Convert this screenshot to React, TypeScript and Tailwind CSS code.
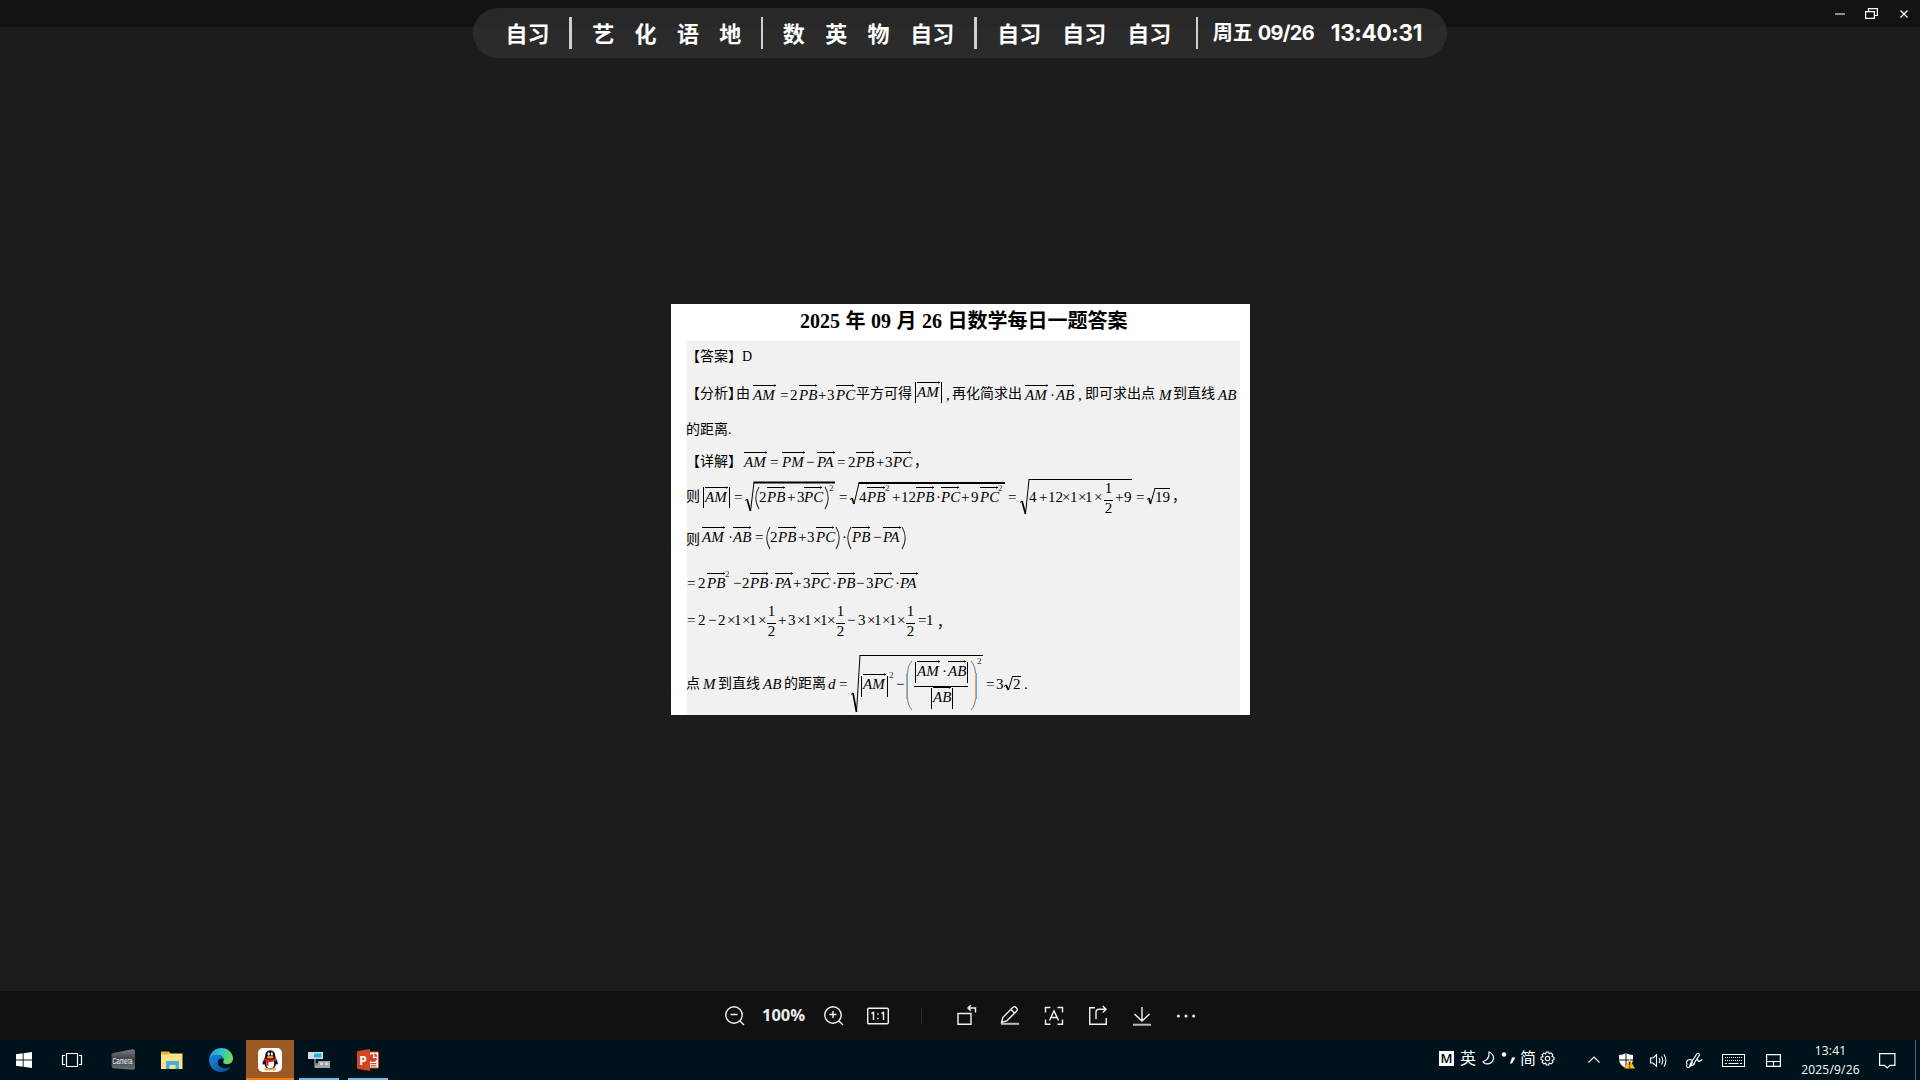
import React, { ReactNode } from "react";

type Item = [number, ReactNode];

/* A run of formula pieces: each piece starts at its tab stop and fills up to the next one. */
function Row({ items, from, className = "" }: { items: Item[]; from: number; className?: string }) {
  return (
    <div className={`flex h-4 items-start whitespace-nowrap ${className}`}>
      <span className="shrink-0" style={{ width: items[0][0] - from }} />
      {items.map(([x, node], i) => (
        <span
          key={i}
          className="block h-4 shrink-0"
          style={i < items.length - 1 ? { width: items[i + 1][0] - x } : undefined}
        >
          {node}
        </span>
      ))}
    </div>
  );
}

const Cn = ({ children, low = false, high = false }: { children: ReactNode; low?: boolean; high?: boolean }) => (
  <span className={`block text-[14px] leading-4 ${low ? "mt-[3px]" : ""} ${high ? "-mt-px" : ""}`}>{children}</span>
);
const It = ({ children }: { children: ReactNode }) => <i className="block">{children}</i>;

function Vec({ children, up = false }: { children: string; up?: boolean }) {
  const w = children.includes("M") ? 23 : 18;
  return (
    <span className={`relative block ${up ? "-mt-[3px]" : ""}`}>
      <i className="block">{children}</i>
      <svg className="absolute -top-[3px] left-0 overflow-visible" width={w} height="4">
        <rect x="0" y="1" width={w} height="1" fill="#000" />
        <path d={`M${w - 2} 0.3L${w + 0.3} 1.5L${w - 2} 2.7Z`} fill="#000" />
      </svg>
    </span>
  );
}

const Sup = ({ high = false }: { high?: boolean }) => (
  <span className={`block text-[9px] leading-2 text-[#333] ${high ? "-mt-[19px]" : "-mt-[5px]"}`}>2</span>
);

const Half = () => (
  <span className="-mt-[9px] flex w-[9px] flex-col items-center">
    <span className="h-4">1</span>
    <span className="mt-1 h-px w-[9px] bg-black" />
    <span className="-mt-px h-4">2</span>
  </span>
);

const Bar = ({ shift = "-mt-0.5" }: { shift?: string }) => (
  <span className={`block h-[21px] w-px bg-black ${shift}`} />
);

function Paren({ right = false }: { right?: boolean }) {
  return (
    <svg className="-mt-0.5 block overflow-visible" width="4" height="22" fill="none" stroke="#333" strokeWidth="1.1">
      <path d={right ? "M0 0Q6.5 11 0 22" : "M4 0Q-2.5 11 4 22"} />
    </svg>
  );
}

function TallParen({ right = false }: { right?: boolean }) {
  const curve = right ? "M0 0Q4.5 5 4.5 13V36Q4.5 44 0 49" : "M6 0Q1.5 5 1.5 13V36Q1.5 44 6 49";
  return (
    <svg className="-mt-[15px] block overflow-visible" width="6" height="49" fill="none">
      <path d={curve} stroke="#777" strokeWidth="1" />
      <path d={right ? "M4.5 12V38" : "M0.5 12V38"} stroke={right ? "#f0a060" : "#c9a48c"} />
      <path d={right ? "M5.5 12V38" : "M1.5 12V38"} stroke="#5aa9e0" />
    </svg>
  );
}

type RootProps = { hook: number; low: [number, number]; apex: [number, number]; end: number; line?: number };
function Root({ hook, low, apex, end, line = 1 }: RootProps) {
  return (
    <svg className="block overflow-visible" width="1" height="1" fill="none" stroke="#000">
      <path d={`M0 ${hook + 1.5}L2 ${hook}`} strokeWidth="1" />
      <path d={`M2 ${hook}L${low[0]} ${low[1]}`} strokeWidth="1.7" />
      <path d={`M${low[0]} ${low[1]}L${apex[0]} ${apex[1]}`} strokeWidth="1" />
      <path d={`M${apex[0] - 0.5} ${apex[1]}H${end}`} strokeWidth={line} />
    </svg>
  );
}

const analysis: Item[] = [
  [686, <Cn high>【分析</Cn>], [728, <span className="-mt-px block h-4 w-2 overflow-hidden text-[14px]">】</span>],
  [736, <Cn high>由</Cn>], [753, <Vec>AM</Vec>], [780, "="], [790, "2"],
  [799, <Vec>PB</Vec>], [818, "+"], [827, "3"], [836, <Vec>PC</Vec>], [856, <Cn high>平方可得</Cn>],
  [915, <Bar shift="-mt-[5px]" />], [917, <Vec up>AM</Vec>], [941, <Bar shift="-mt-[5px]" />], [946, ","],
  [952, <Cn high>再化简求出</Cn>], [1025, <Vec>AM</Vec>], [1050, "·"], [1056, <Vec>AB</Vec>], [1078, ","],
  [1085, <Cn high>即可求出点</Cn>], [1159, <It>M</It>], [1173, <Cn high>到直线</Cn>], [1218, <It>AB</It>],
];

const detail: Item[] = [
  [686, <Cn>【详解</Cn>], [728, <Cn>】</Cn>], [744, <Vec>AM</Vec>], [770, "="], [782, <Vec>PM</Vec>], [806, "−"],
  [817, <Vec>PA</Vec>], [837, "="], [848, "2"], [856, <Vec>PB</Vec>], [876, "+"], [885, "3"],
  [893, <Vec>PC</Vec>], [914, <Cn>，</Cn>],
];

const modulus: Item[] = [
  [686, <Cn>则</Cn>], [703, <Bar />], [705, <Vec>AM</Vec>], [729, <Bar />], [734, "="],
  [745, <Root hook={10} low={[5.5, 22]} apex={[9, -6.5]} end={90} line={2} />],
  [755, <Paren />], [759, "2"], [767, <Vec>PB</Vec>], [787, "+"], [797, "3"], [804, <Vec>PC</Vec>],
  [825, <Paren right />], [829, <Sup />], [839, "="],
  [850, <Root hook={9} low={[4, 15]} apex={[9, -6]} end={155} line={2} />],
  [859, "4"], [867, <Vec>PB</Vec>], [885, <Sup />], [892, "+"], [901, "12"], [916, <Vec>PB</Vec>], [936, "·"],
  [941, <Vec>PC</Vec>], [961, "+"], [971, "9"], [980, <Vec>PC</Vec>], [998, <Sup />], [1008, "="],
  [1020, <Root hook={12} low={[5.5, 25]} apex={[9, -9.5]} end={112} />],
  [1029, "4"], [1039, "+"], [1048, "12"], [1062, "×"], [1070, "1"], [1078, "×"], [1085, "1"], [1094, "×"],
  [1104, <Half />], [1115, "+"], [1124, "9"], [1136, "="],
  [1147, <Root hook={9} low={[3.5, 15]} apex={[8, -0.5]} end={23} />], [1155, "19"], [1172, <Cn>，</Cn>],
];

const product: Item[] = [
  [686, <Cn low>则</Cn>], [702, <Vec>AM</Vec>], [728, "·"], [733, <Vec>AB</Vec>], [755, "="], [766, <Paren />],
  [770, "2"], [778, <Vec>PB</Vec>], [798, "+"], [807, "3"], [816, <Vec>PC</Vec>], [836, <Paren right />],
  [842, "·"], [847, <Paren />], [852, <Vec>PB</Vec>], [873, "−"], [883, <Vec>PA</Vec>], [902, <Paren right />],
];

const expanded: Item[] = [
  [687, "="], [698, "2"], [707, <Vec>PB</Vec>], [725, <Sup />], [733, "−"], [742, "2"], [750, <Vec>PB</Vec>],
  [769, "·"], [775, <Vec>PA</Vec>], [793, "+"], [803, "3"], [811, <Vec>PC</Vec>], [832, "·"],
  [837, <Vec>PB</Vec>], [856, "−"], [866, "3"], [874, <Vec>PC</Vec>], [895, "·"], [900, <Vec>PA</Vec>],
];

const numbers: Item[] = [
  [687, "="], [698, "2"], [708, "−"], [718, "2"], [727, "×"], [734, "1"], [742, "×"], [749, "1"], [758, "×"],
  [767, <Half />], [778, "+"], [788, "3"], [797, "×"], [804, "1"], [813, "×"], [820, "1"], [827, "×"],
  [836, <Half />], [847, "−"], [858, "3"], [867, "×"], [874, "1"], [882, "×"], [889, "1"], [897, "×"],
  [906, <Half />], [918, "="], [926, "1"], [937, <Cn low>，</Cn>],
];

const distance: Item[] = [
  [686, <Cn>点</Cn>], [703, <It>M</It>], [718, <Cn>到直线</Cn>], [763, <It>AB</It>], [784, <Cn>的距离</Cn>],
  [828, <It>d</It>], [839, "="],
  [851, <Root hook={17} low={[5.5, 36]} apex={[9, -20.5]} end={132} />],
  [861, <Bar shift="mt-0" />], [863, <Vec>AM</Vec>], [887, <Bar shift="mt-0" />], [889, <Sup />], [896, "−"],
  [906, <TallParen />],
  [914, (
    <span className="-mt-[13px] flex flex-col">
      <Row from={914} items={[
        [915, <Bar shift="-mt-px" />], [917, <Vec>AM</Vec>], [942, "·"], [948, <Vec>AB</Vec>], [967, <Bar shift="-mt-px" />],
      ]} />
      <span className="mt-[7px] h-px w-[54px] bg-black" />
      <Row className="mt-0.5" from={914} items={[
        [931, <Bar shift="-mt-px" />], [933, <Vec>AB</Vec>], [952, <Bar shift="-mt-px" />],
      ]} />
    </span>
  )],
  [971, <TallParen right />], [977, <Sup high />], [986, "="], [996, "3"],
  [1004, <Root hook={9} low={[4.5, 14]} apex={[8.5, 0.5]} end={17} />], [1013, "2"], [1024, "."],
];

function Paper() {
  return (
    <article className="flex h-[411px] w-[579px] flex-col bg-white font-['Liberation_Serif','Noto_Sans_CJK_SC',serif] text-[15px] leading-4 text-black">
      <h1 className="h-[37px] pl-[129px] pt-[3px] text-[20px] leading-[28px] font-bold whitespace-nowrap [word-spacing:0.5px]">
        2025 年 09 月 26 日数学每日一题答案
      </h1>
      <section className="ml-4 h-[374px] w-[553px] bg-[#f1f1f1] pt-2">
        <div className="-ml-px">
          <Row from={686} items={[[686, <Cn>【答案</Cn>], [728, <Cn>】</Cn>], [742, <Cn>D</Cn>]]} />
          <Row className="mt-[22px]" from={686} items={analysis} />
          <Row className="mt-[19px]" from={686} items={[[686, <Cn>的距离.</Cn>]]} />
          <Row className="mt-4" from={686} items={detail} />
          <Row className="mt-[19px]" from={686} items={modulus} />
          <Row className="mt-6" from={686} items={product} />
          <Row className="mt-[30px]" from={686} items={expanded} />
          <Row className="mt-[21px]" from={686} items={numbers} />
          <Row className="mt-12" from={686} items={distance} />
        </div>
      </section>
    </article>
  );
}

function Schedule() {
  const one = "w-[42.4px] text-center";
  const two = "w-[65px] text-center";
  return (
    <div className="absolute top-2 left-[473px] flex h-[50px] w-[974px] items-center rounded-full bg-[#343434]/65 pb-px font-['Noto_Sans_CJK_SC',sans-serif] text-[22px] leading-[30px] font-bold whitespace-nowrap text-white">
      <span className="-mt-0.5 ml-[22px] w-[65px] text-center">自习</span>
      <span className="ml-[9px] h-8 w-[3px] bg-[#cfcfcf]" />
      <span className="-mt-0.5 ml-[10px] flex">
        {["艺", "化", "语", "地"].map((s) => <span key={s} className={one}>{s}</span>)}
      </span>
      <span className="ml-[9px] h-8 w-[2px] bg-[#cfcfcf]" />
      <span className="-mt-0.5 ml-[10px] flex">
        {["数", "英", "物"].map((s) => <span key={s} className={one}>{s}</span>)}
        <span className={two}>自习</span>
      </span>
      <span className="ml-[9px] h-8 w-[3px] bg-[#cfcfcf]" />
      <span className="-mt-0.5 ml-[10px] flex">
        <span className={two}>自习</span>
        <span className={two}>自习</span>
        <span className={two}>自习</span>
      </span>
      <span className="ml-[14px] h-8 w-[2px] bg-[#cfcfcf]" />
      <span className="-mt-px ml-[15px] w-[45px] text-[20px]">周五</span>
      <span className="w-[73px] font-['Inter'] text-[20px] tracking-[-0.7px]">09/26</span>
      <span className="font-['Inter'] text-[22.5px] tracking-[-0.3px]">13:40:31</span>
    </div>
  );
}

const Tool = ({ children, className = "" }: { children: ReactNode; className?: string }) => (
  <svg className={`block h-[22px] w-[22px] shrink-0 overflow-visible ${className}`} viewBox="0 0 22 22" fill="none" stroke="#f2f2f2" strokeWidth="1.4">
    {children}
  </svg>
);

function Toolbar() {
  return (
    <div className="flex h-[49px] items-center bg-[#111111] pl-[724px]">
      <Tool>
        <circle cx="10" cy="10" r="8.2" /><path d="M16 16L20 20M6.5 9.5H13.5" />
      </Tool>
      <span className="ml-4 w-[61px] font-['Open_Sans'] text-[16.5px] font-bold text-[#ececec]">100%</span>
      <Tool>
        <circle cx="10" cy="10" r="8.2" /><path d="M16 16L20 20M6.5 9.5H13.5M10 6V13" />
      </Tool>
      <Tool className="ml-[22px]">
        <rect x="0.7" y="3.2" width="20.6" height="15.6" rx="1" /><path d="M4.5 8.5L6.5 7.5V15M14.5 8.5L16.5 7.5V15" />
        <path d="M10.2 9H11.6M10.2 13.5H11.6" strokeWidth="1.6" />
      </Tool>
      <span className="ml-8 h-4 w-px bg-[#2c2c2c]" />
      <span className="ml-[33px] flex gap-[22px]">
        <Tool><path d="M3 8.5H16V19.3H3ZM20.500 7.5V3H13M15.8 0.3L13 3L15.8 5.7" /></Tool>
        <Tool>
          <path d="M2.5 17.5L4 12.3L14 2.3Q15.6 1 17.3 2.7Q19 4.4 17.7 6L7.7 16ZM12 4.5L15.7 8.2" />
          <path d="M2 18.8H20" stroke="#bdbdbd" strokeWidth="2" />
        </Tool>
        <Tool>
          <path d="M2.5 7.5V2.5H7.5M14.5 2.5H19.5V7.5M19.5 14.5V19.3H14.5M7.5 19.3H2.5V14.5" />
          <path d="M6.5 15.5L11 5.8L15.5 15.5M8 12.5H14" />
        </Tool>
        <Tool>
          <path d="M8 2.7H2.7V19.3H19.3V13M9 14V7Q9 4.2 12 4.2H19M15.8 1L19 4.2L15.8 7.4" />
        </Tool>
        <Tool>
          <path d="M11 2V15.5M3.5 9L11 16L18.5 9" /><path d="M2 19.7H20" stroke="#bdbdbd" strokeWidth="2" />
        </Tool>
        <Tool>
          <g fill="#f2f2f2" stroke="none"><circle cx="3.4" cy="11" r="1.5" /><circle cx="11" cy="11" r="1.5" /><circle cx="18.6" cy="11" r="1.5" /></g>
        </Tool>
      </span>
    </div>
  );
}

function Launcher({ children, active = "" }: { children: ReactNode; active?: string }) {
  return (
    <div className={`flex h-10 w-12 shrink-0 items-center justify-center ${active}`}>
      <svg className="block h-6 w-6 overflow-visible" viewBox="0 0 24 24" fill="none">{children}</svg>
    </div>
  );
}

function Taskbar() {
  return (
    <footer className="flex h-10 items-center bg-[#00131c] text-white">
      <div className="flex">
        <Launcher>
          <path d="M4 6.3L10.7 5.3V11.5H4ZM11.6 5.2L20 4V11.5H11.6ZM4 12.4H10.7V18.7L4 17.7ZM11.6 12.4H20V20L11.6 18.8Z" fill="#fff" />
        </Launcher>
        <Launcher>
          <path d="M6.500 5.5H17.500V18.5H6.500ZM5 7.5H2.500V16.5H5M19 7.5H21.500V16.5H19" stroke="#fff" strokeWidth="1.2" />
        </Launcher>
        <Launcher active="ml-[3px]">
          <defs><linearGradient id="cam" x1="0" y1="0" x2="0" y2="1"><stop stopColor="#777b7f" /><stop offset=".5" stopColor="#3b4045" /><stop offset="1" stopColor="#6d7275" /></linearGradient></defs>
          <path d="M0.500 6Q1.500 5 3.500 4.800L21.500 1.200Q24 1 24 3V20Q24 22 21.500 21.800L2.500 20.200Q.7 20 .7 18Z" fill="url(#cam)" />
          <text x="1.500" y="15.800" fontSize="9.500" fontFamily="Liberation Sans" fill="#fff" textLength="20" lengthAdjust="spacingAndGlyphs">Camera</text>
        </Launcher>
        <Launcher active="ml-px">
          <path d="M1 4H9L10.5 5.5H22.5V21H1Z" fill="#ffe08a" /><path d="M1 3.5H9L10 5L9 6.5H1Z" fill="#e9b32b" />
          <path d="M6 21V13H19V21H15.5V17H9.5V21Z" fill="#42b0e3" />
        </Launcher>
        <Launcher active="ml-px">
          <defs>
            <linearGradient id="edgeTop" x1="0" y1="0" x2="1" y2=".4"><stop stopColor="#1f8fd6" /><stop offset=".5" stopColor="#2bc3d2" /><stop offset="1" stopColor="#6bdc55" /></linearGradient>
            <linearGradient id="edgeLow" x1="0" y1="0" x2="1" y2="1"><stop stopColor="#1a86dc" /><stop offset="1" stopColor="#0c4a9a" /></linearGradient>
          </defs>
          <path d="M0.2 11C1 4.500 6 0 12.200 0C19 0 24 5 24 10.500C24 14 21.500 16.200 18.200 16.200C15 16.200 13.800 15 14.300 13.800C16 10 12.500 7 8.500 7C5 7 1.500 8.500 0.200 11Z" fill="url(#edgeTop)" />
          <path d="M0.100 12C0.500 8.500 4 6.500 8.500 6.800C11.500 7 14 8.500 14.500 11C10 9 7.500 13 9.500 17C11.500 20.500 17 21.500 22 18.200C19.500 22.200 15.800 24 12 24C5 24 0 18.500 0.100 12Z" fill="url(#edgeLow)" />
        </Launcher>
        <Launcher active="ml-px border-b-2 border-[#ff7a0c] bg-[#9a5925]">
          <rect x="0" y="1" width="24" height="24" rx="5" fill="#fff" />
          <path d="M7 10Q7 3.200 12.200 3.200Q17.400 3.200 17.400 10L19.800 15.500Q20.300 18.500 18 17Q17 22.500 12.200 22.500Q7.400 22.500 6.400 17Q4.100 18.500 4.600 15.500Z" fill="#151515" />
          <path d="M8.300 14H16Q17 21.500 12.200 21.500Q7.500 21.500 8.300 14Z" fill="#fff" />
          <ellipse cx="10.700" cy="7" rx="1.100" ry="1.700" fill="#fff" /><ellipse cx="13.800" cy="7" rx="1.100" ry="1.700" fill="#fff" />
          <ellipse cx="12.200" cy="10.200" rx="3.400" ry="1.200" fill="#f5a623" />
          <path d="M6.500 11Q12.200 14.500 18 11L18.300 13.200Q14 15.500 10.500 15V18.500H8.200V14.500L6.200 13.200Z" fill="#e3202a" />
          <ellipse cx="9.200" cy="22.300" rx="3" ry="1.200" fill="#f5a623" /><ellipse cx="15.200" cy="22.300" rx="3" ry="1.200" fill="#f5a623" />
        </Launcher>
        <Launcher active="ml-px">
          <path d="M1 4H16V11H1Z" fill="#d9dcde" /><path d="M7 5.500H14.500V9.500H7Z" fill="#19b5f1" />
          <path d="M8 11V16H12" stroke="#8b9094" strokeWidth="1.500" /><path d="M11 13H23V20H7.500V16.500H11Z" fill="#9fa4a7" />
          <path d="M13 14.500H16V17H13ZM18 14.500H21.500V17H18Z" fill="#d5d8da" />
          <rect x="-8" y="30" width="40" height="2" fill="#76b9ed" />
        </Launcher>
        <Launcher active="ml-px">
          <path d="M12 4H22.500V20H12Z" fill="#fff" stroke="#d24625" strokeWidth="1" />
          <path d="M17 6V10H21A4 4 0 1 1 17 6ZM18.300 5.500A3.500 3.500 0 0 1 21.500 8.700H18.300ZM14.500 15H20.500V16.200H14.500ZM14.500 17.300H20.500V18.500H14.500Z" fill="#d24625" />
          <path d="M1 3.300L14 1V23L1 20.700Z" fill="#d24625" />
          <text x="3.200" y="16.500" fontSize="12" fontFamily="Open Sans" fontWeight="700" fill="#fff">P</text>
          <rect x="-8" y="30" width="40" height="2" fill="#76b9ed" />
        </Launcher>
      </div>
      <div className="ml-auto flex h-10 items-center font-['Noto_Sans_CJK_SC',sans-serif] text-[16px]">
        <div className="mr-8 flex h-10 items-center pb-1">
          <span className="mr-[6px] flex h-[15px] w-[15px] items-center justify-center bg-white font-['Open_Sans'] text-[13px] leading-[15px] font-semibold text-black">M</span>
          <span className="-mt-0.5 w-[22px] leading-5">英</span>
          <svg className="mr-[6px] block" width="13" height="14" fill="none" stroke="#fff" strokeWidth="1.100"><path d="M7 1Q12 3 11.500 8Q10 13.500 3.500 12.800Q1.500 12 1 10.500Q7.500 9 7 1Z" /></svg>
          <svg className="mr-1 block" width="15" height="14" fill="#fff"><circle cx="3" cy="3.500" r="2.200" /><path d="M11 6.500H14.500L11 12.500H9Z" /></svg>
          <span className="-mt-0.5 w-[20px] leading-5">简</span>
          <svg className="mr-px block" width="15" height="15" viewBox="0 0 15 15" fill="none" stroke="#fff" strokeWidth="1.100">
            <circle cx="7.500" cy="7.500" r="2.200" />
            <path d="M6.300 1H8.700L9.200 2.800L11 1.900L12.800 3.700L12 5.500L14 6.300V8.700L12.100 9.300L13 11.200L11.200 12.900L9.300 12L8.700 14H6.300L5.700 12L3.800 12.900L2.100 11.200L3 9.300L1 8.700V6.300L3 5.600L2.100 3.800L3.900 2.100L5.700 3Z" />
          </svg>
        </div>
        <svg className="block" width="12" height="8" fill="none" stroke="#fff" strokeWidth="1.200"><path d="M.5 6.500L6 1L11.500 6.500" /></svg>
        <svg className="ml-[19px] block" width="16" height="17">
          <path d="M7 1Q10 3 14 3V8Q13.500 13 7 16Q.5 13 0 8V3Q4 3 7 1Z" fill="#fff" />
          <path d="M7 1V16M0 8H14" stroke="#00131c" strokeWidth="1" />
          <path d="M10.500 7L16 16.500H5.500Z" fill="#fbbc17" /><path d="M10.700 10V13.300M10.700 14.300V15.500" stroke="#222" strokeWidth="1.200" />
        </svg>
        <svg className="ml-[15px] block" width="18" height="15" fill="none" stroke="#fff" strokeWidth="1.100">
          <path d="M.6 5H3L6.500 1.800V13.200L3 10H.6ZM9 5Q10.700 7.500 9 10M11.500 3.500Q14 7.500 11.500 11.500M14 1.500Q17.800 7.500 14 13.500" />
        </svg>
        <svg className="ml-[18px] block" width="17" height="17" fill="none" stroke="#fff" strokeWidth="1.200">
          <path d="M4.500 11.500L11 1.700Q13 .5 13.500 3L7 13L3.500 14.500ZM1 12Q-.5 8 4 7.500Q7 7.500 6 11Q4 16 1.500 15.500Q0 14.500 1 12M8 12.500Q10 6 12 8Q12 11 16 7.500" />
        </svg>
        <svg className="ml-[19px] block" width="23" height="13" fill="none" stroke="#fff">
          <rect x=".5" y=".5" width="22" height="12" /><path d="M3 3.500H20M3 6.500H20" strokeDasharray="1 1" /><path d="M3 9.500H5M6.500 9.500H16.500M18 9.500H20" />
        </svg>
        <svg className="ml-[21px] block" width="15" height="13" fill="none" stroke="#fff" strokeWidth="1.200"><path d="M.6 .6H14.400V12.400H.6ZM.6 7.500H14.400M7.500 7.500V12.400" /></svg>
        <div className="ml-[17px] w-[65px] text-center font-['Open_Sans'] text-[12px] leading-[19px] tracking-[0.2px] whitespace-nowrap">
          <div>13:41</div>
          <div>2025/9/26</div>
        </div>
        <svg className="ml-4 block" width="17" height="17" fill="none" stroke="#fff" strokeWidth="1.200"><path d="M.6 1.600H15.900V13.400H11L8.200 16L5.500 13.400H.6Z" /></svg>
        <span className="ml-[19px] h-10 w-[5px] border-l border-[#5c686e]" />
      </div>
    </footer>
  );
}

export default function App() {
  return (
    <div className="relative flex h-[1080px] w-[1920px] flex-col overflow-hidden bg-[#1c1c1c]">
      <header className="flex h-[27px] shrink-0 items-start bg-[#131313] pl-[1835px]">
        <span className="mt-[13px] h-[2px] w-[10px] bg-[#8d8d8d]" />
        <svg className="mt-2 ml-5 block" width="13" height="11" fill="none" stroke="#fff" strokeWidth="1.200">
          <path d="M.6 3.600H9.400V10.400H.6ZM3.500 3.500V.6H12.400V7.500H9.500" />
        </svg>
        <svg className="mt-[10px] ml-[22px] block" width="8" height="8" fill="none" stroke="#fff" strokeWidth="1.300"><path d="M.5 .5L7.500 7.500M7.500 .5L.5 7.500" /></svg>
      </header>
      <main className="flex grow flex-col items-start pt-[277px] pl-[671px]">
        <Paper />
      </main>
      <Toolbar />
      <Taskbar />
      <Schedule />
    </div>
  );
}
